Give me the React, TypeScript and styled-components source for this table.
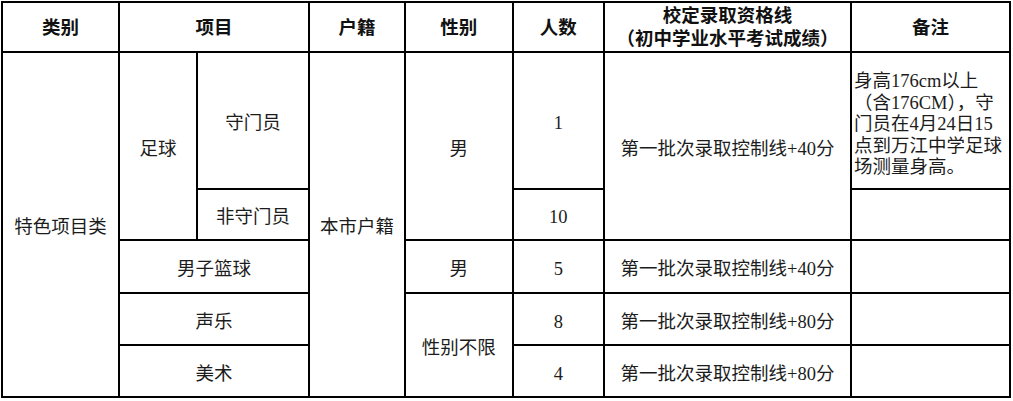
import React from "react";
import styled, { createGlobalStyle } from "styled-components";

const Global = createGlobalStyle`
  html, body {
    margin: 0;
    padding: 0;
    background: #ffffff;
  }
  body {
    font-family: "Liberation Serif", "Noto Sans CJK SC", serif;
  }
`;

const Frame = styled.div`
  padding: 1px 0 0 1px;
`;

const Table = styled.table`
  width: 1010px;
  table-layout: fixed;
  border-collapse: collapse;
  font-family: "Liberation Serif", "Noto Sans CJK SC", serif;
  font-size: 18.5px;
  color: #1c1c1c;
`;

const Row = styled.tr<{ $h: number }>`
  height: ${(p) => p.$h}px;
`;

const Head = styled.th`
  border: 2px solid #000;
  padding: 2px 0 0;
  font-weight: 700;
  color: #111;
  line-height: 23px;
  text-align: center;
  vertical-align: middle;
`;

const Cell = styled.td<{ $left?: boolean }>`
  border: 2px solid #000;
  padding: ${(p) => (p.$left ? "9px 2px 0" : "5px 0 0")};
  text-align: ${(p) => (p.$left ? "left" : "center")};
  vertical-align: middle;
  line-height: 22px;
  white-space: nowrap;
`;

const NoteLine = styled.span`
  display: block;
  line-height: 21.5px;
`;

const cols = [117, 78, 112, 96, 107.5, 91.5, 247, 159];

const noteLines = [
  "身高176cm以上",
  "（含176CM），守",
  "门员在4月24日15",
  "点到万江中学足球",
  "场测量身高。",
];

export default function App() {
  return (
    <>
      <Global />
      <Frame>
        <Table>
          <colgroup>
            {cols.map((w, i) => (
              <col key={i} style={{ width: w }} />
            ))}
          </colgroup>
          <thead>
            <Row $h={50}>
              <Head>类别</Head>
              <Head colSpan={2}>项目</Head>
              <Head>户籍</Head>
              <Head>性别</Head>
              <Head>人数</Head>
              <Head>
                校定录取资格线
                <br />
                （初中学业水平考试成绩）
              </Head>
              <Head>备注</Head>
            </Row>
          </thead>
          <tbody>
            <Row $h={137}>
              <Cell rowSpan={5}>特色项目类</Cell>
              <Cell rowSpan={2}>足球</Cell>
              <Cell>守门员</Cell>
              <Cell rowSpan={5}>本市户籍</Cell>
              <Cell rowSpan={2}>男</Cell>
              <Cell>1</Cell>
              <Cell rowSpan={2}>第一批次录取控制线+40分</Cell>
              <Cell $left>
                {noteLines.map((l) => (
                  <NoteLine key={l}>{l}</NoteLine>
                ))}
              </Cell>
            </Row>
            <Row $h={51}>
              <Cell>非守门员</Cell>
              <Cell>10</Cell>
              <Cell />
            </Row>
            <Row $h={53}>
              <Cell colSpan={2}>男子篮球</Cell>
              <Cell>男</Cell>
              <Cell>5</Cell>
              <Cell>第一批次录取控制线+40分</Cell>
              <Cell />
            </Row>
            <Row $h={52}>
              <Cell colSpan={2}>声乐</Cell>
              <Cell rowSpan={2}>性别不限</Cell>
              <Cell>8</Cell>
              <Cell>第一批次录取控制线+80分</Cell>
              <Cell />
            </Row>
            <Row $h={52}>
              <Cell colSpan={2}>美术</Cell>
              <Cell>4</Cell>
              <Cell>第一批次录取控制线+80分</Cell>
              <Cell />
            </Row>
          </tbody>
        </Table>
      </Frame>
    </>
  );
}
